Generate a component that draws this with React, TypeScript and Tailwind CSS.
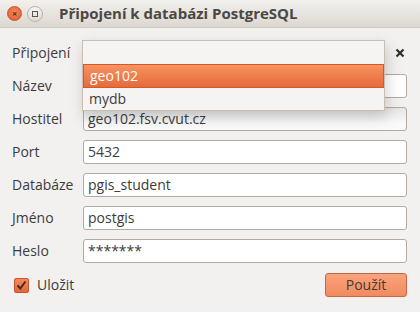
import React from "react";

const font = { fontFamily: '"Open Sans", "DejaVu Sans", sans-serif' };

function Field({ label, value, shaded }: { label: string; value: string; shaded?: boolean }) {
  return (
    <div className="flex items-center h-[24px]">
      <div className="w-[71px] text-[14px] text-[#3c3c3c] leading-none">{label}</div>
      <div
        className={`flex-1 h-[24px] rounded-[3px] border border-[#b3aaa1] flex items-center px-[4px] text-[14px] text-[#3c3c3c] leading-none ${
          shaded ? "bg-[linear-gradient(180deg,#e6e5e4,#fafafa_70%)]" : "bg-white"
        }`}
      >
        {value}
      </div>
    </div>
  );
}

export default function App() {
  return (
    <div className="w-[420px] h-[312px] bg-[#f2f1f0] relative overflow-hidden" style={font}>
      {/* title bar */}
      <div className="h-[28px] flex items-center bg-[linear-gradient(180deg,#f2f0ed,#dcd7d0)] border-b border-[#cfc9c1]">
        <div className="ml-[7px] w-[15px] h-[15px] rounded-full bg-[radial-gradient(circle_at_50%_40%,#f58a5c,#e0572a)] border border-[#c5532c] flex items-center justify-center">
          <span className="text-[#5a2a18] text-[9px] font-bold leading-none">×</span>
        </div>
        <div className="ml-[5px] w-[16px] h-[16px] rounded-full bg-[linear-gradient(180deg,#f7f6f4,#dedad5)] border border-[#b8b2ab] flex items-center justify-center">
          <div className="w-[6px] h-[6px] border border-[#5a5550]" />
        </div>
        <div className="ml-[16px] text-[15px] font-bold text-[#4b4843] leading-none">
          Připojení k databázi PostgreSQL
        </div>
      </div>

      {/* body */}
      <div className="pl-[12px] pr-[13px] pt-[13px] flex flex-col gap-[9px]">
        <div className="flex items-center h-[24px]">
          <div className="w-[71px] text-[14px] text-[#3c3c3c] leading-none">Připojení</div>
          <div className="flex-1 h-[24px] rounded-[3px] border border-[#b3aaa1] bg-white" />
          <div className="w-[23px] flex justify-end pr-[2px]">
            <svg width="10" height="10" viewBox="0 0 10 10">
              <path d="M1.5 1.5 L8.5 8.5 M8.5 1.5 L1.5 8.5" stroke="#2e2e2e" strokeWidth="2.2" />
            </svg>
          </div>
        </div>
        <Field label="Název" value="" />
        <Field label="Hostitel" value="geo102.fsv.cvut.cz" shaded />
        <Field label="Port" value="5432" />
        <Field label="Databáze" value="pgis_student" />
        <Field label="Jméno" value="postgis" />
        <Field label="Heslo" value="*******" />
        <div className="flex items-center justify-between h-[24px] mt-[1px]">
          <div className="flex items-center">
            <div className="ml-[2px] w-[15px] h-[15px] rounded-[2px] bg-[linear-gradient(180deg,#f4895c,#e2673a)] border border-[#c4552c] flex items-center justify-center">
              <svg width="11" height="11" viewBox="0 0 11 11">
                <path d="M1.5 5.5 L4.3 8.5 L9.5 1.5" stroke="#4a2a1e" strokeWidth="2" fill="none" />
              </svg>
            </div>
            <span className="ml-[8px] text-[14px] text-[#3c3c3c] leading-none">Uložit</span>
          </div>
          <div className="w-[82px] h-[24px] rounded-[3px] border border-[#c0694a] bg-[linear-gradient(180deg,#f9a47e,#f28a5f)] flex items-center justify-center text-[14px] text-[#4a3a33] leading-none">
            Použít
          </div>
        </div>
      </div>

      {/* popup */}
      <div className="absolute left-[82px] top-[40px] w-[303px] h-[71px] bg-[#f5f4f2] border border-[#c8beb4] shadow-[2px_6px_14px_rgba(0,0,0,0.18)] flex flex-col">
        <div className="h-[23px]" />
        <div className="h-[24px] bg-[linear-gradient(180deg,#f8935f,#e56a3c)] border border-[#d4582a] flex items-center pl-[6px] text-[14px] text-white leading-none">
          geo102
        </div>
        <div className="h-[22px] flex items-center pl-[6px] text-[14px] text-[#3c3c3c] leading-none">mydb</div>
      </div>
    </div>
  );
}
